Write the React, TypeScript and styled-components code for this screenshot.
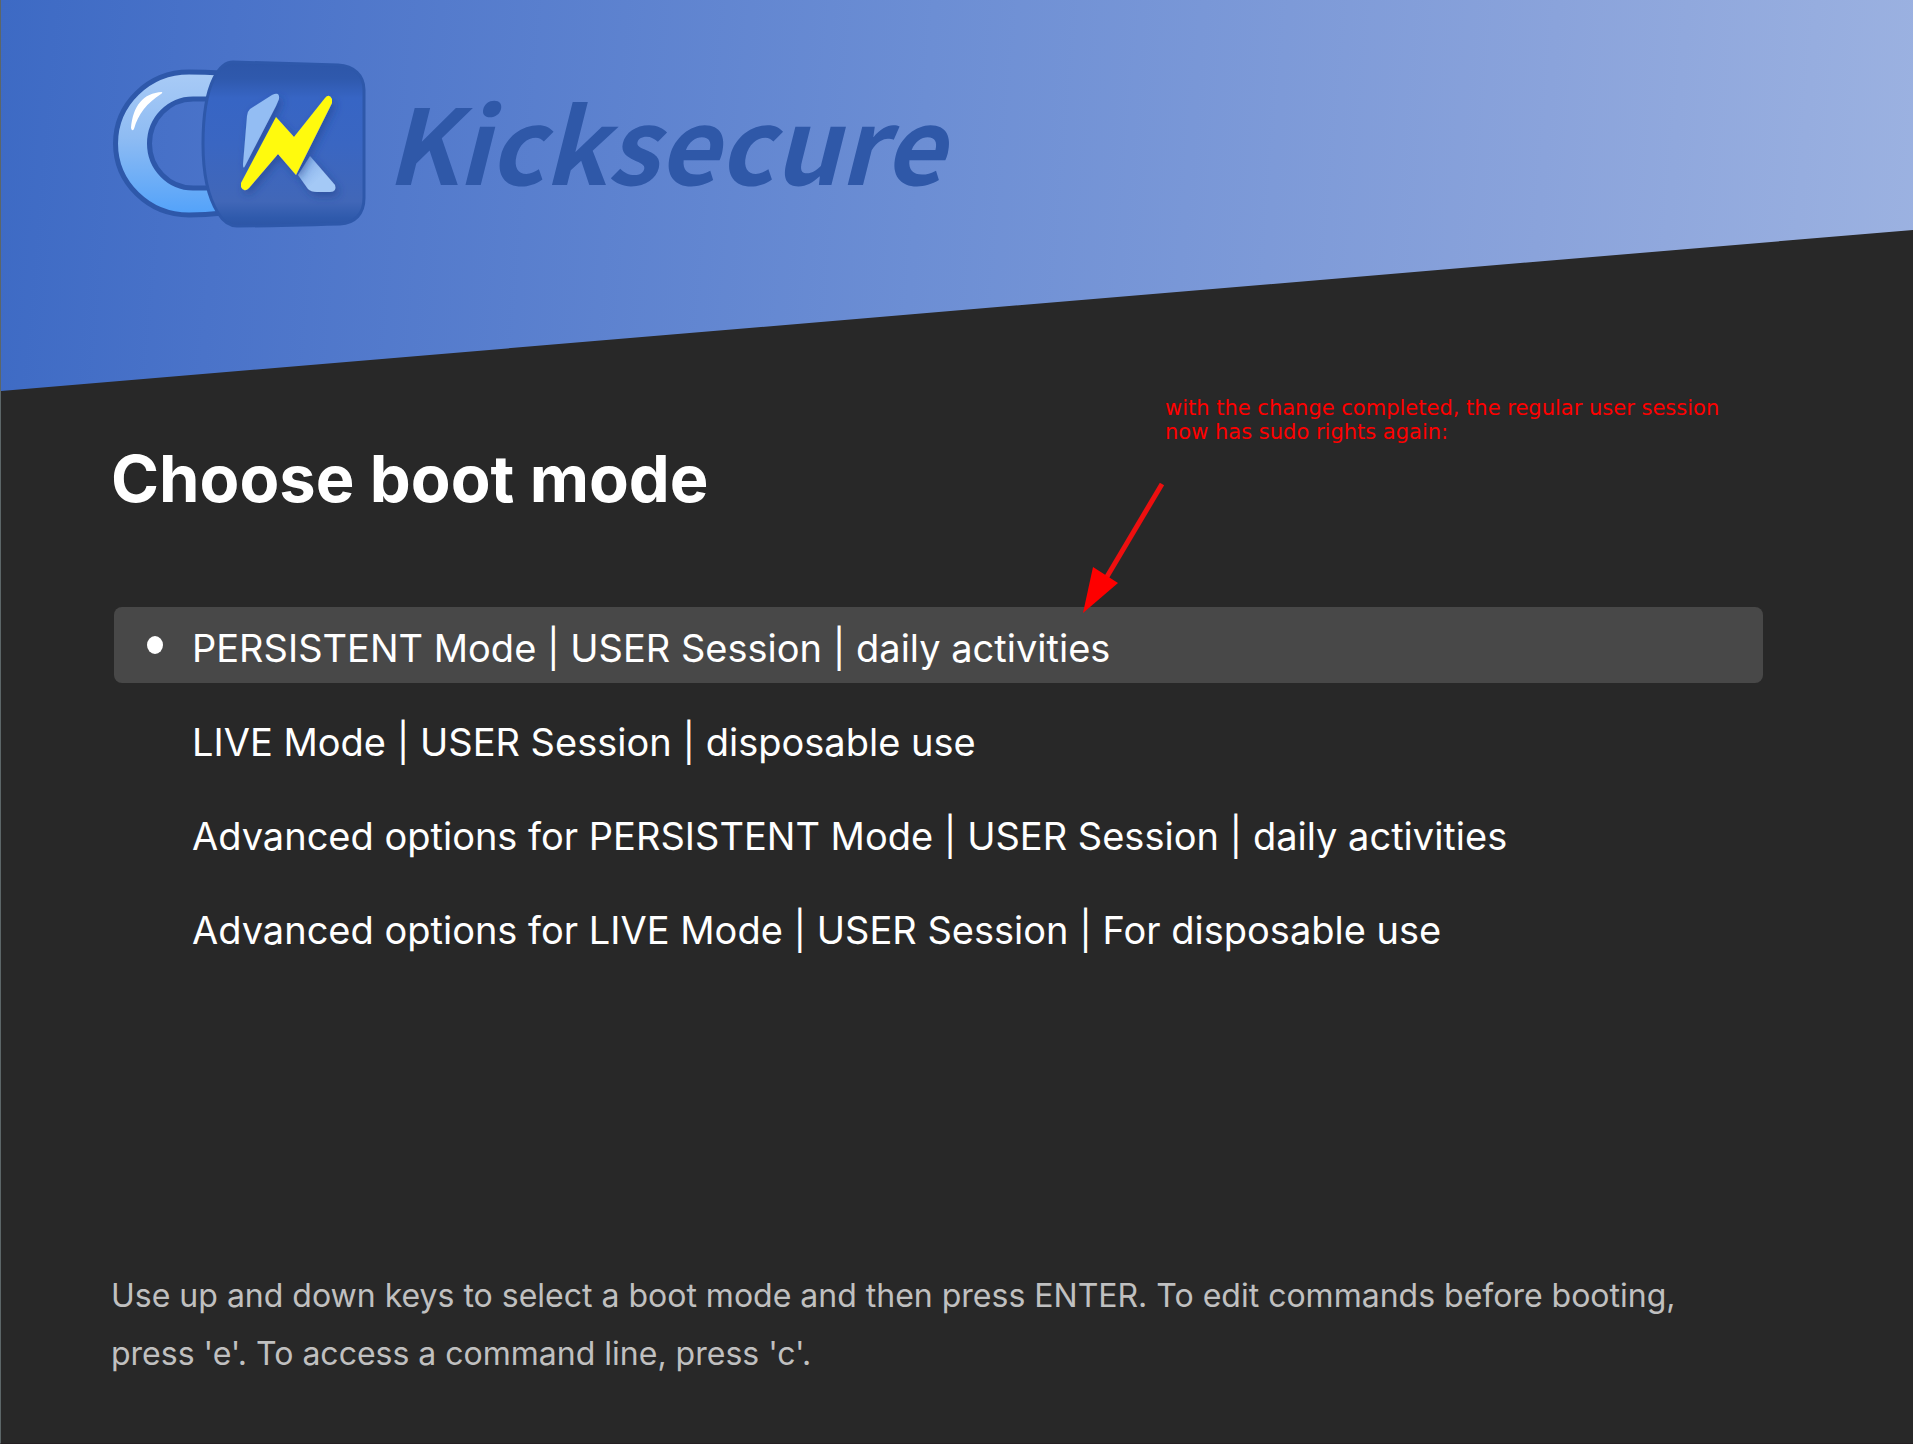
import React, { useState } from "react";
import styled, { createGlobalStyle } from "styled-components";

const Global = createGlobalStyle`
  *, *::before, *::after { box-sizing: border-box; }
  body { margin: 0; background: #282828; }
`;

const Screen = styled.div`
  min-height: 100vh;
  display: flex;
  flex-direction: column;
  background: #282828;
  color: #ffffff;
  border-left: 1px solid #5c6668;
  border-bottom: 1px solid #241f22;
  font-family: Inter, "Liberation Sans", sans-serif;
`;

const Banner = styled.header`
  height: 391px;
  padding: 56px 104px 0;
  background: linear-gradient(95deg, #3d6ac4 0%, #4a73c9 12%, #6c8ed4 48%, #8aa3db 80%, #9cb2e1 100%);
  clip-path: polygon(0 0, 100% 0, 100% 230px, 0 100%);
`;

const Brand = styled.div`
  display: flex;
  align-items: flex-start;
  gap: 17px;
`;

const LogoMark = styled.svg`
  display: block;
  flex: none;
  width: 264px;
  height: 176px;
`;

const BrandName = styled.span`
  font-family: "Noto Sans CJK SC", "Noto Sans", sans-serif;
  font-weight: 700;
  font-style: italic;
  font-size: 104px;
  line-height: 168px;
  color: #2f58a8;
`;

const Main = styled.main`
  flex: 1;
  display: flex;
  flex-direction: column;
  padding: 48px 150px 60px 110px;
`;

const Title = styled.h1`
  margin: 0 0 88px;
  font-size: 65px;
  line-height: 80px;
  font-weight: 700;
`;

const MenuArea = styled.div`
  position: relative;
`;

const Menu = styled.ul`
  list-style: none;
  margin: 0;
  padding: 0 0 0 3px;
  display: flex;
  flex-direction: column;
  gap: 18px;
`;

const Entry = styled.button<{ $selected: boolean }>`
  width: 100%;
  min-height: 76px;
  display: flex;
  align-items: center;
  padding: 0 33px;
  border: 0;
  border-radius: 8px;
  background: ${(p) => (p.$selected ? "#484848" : "transparent")};
  color: inherit;
  font-family: inherit;
  font-size: 38px;
  line-height: 48px;
  text-align: left;
  outline: none;
`;

const Marker = styled.span<{ $visible: boolean }>`
  flex: none;
  width: 16px;
  height: 18px;
  margin-right: 29px;
  border-radius: 50%;
  background: ${(p) => (p.$visible ? "#ffffff" : "transparent")};
`;

const Label = styled.span`
  padding-top: 5px;
`;

const Note = styled.p`
  position: absolute;
  left: 1054px;
  bottom: calc(100% + 163px);
  margin: 0;
  width: 600px;
  font-family: "DejaVu Sans", sans-serif;
  font-size: 21px;
  line-height: 24px;
  color: #fe0000;
`;

const Arrow = styled.svg`
  position: absolute;
  left: 970px;
  top: -126px;
  width: 84px;
  height: 134px;
`;

const Help = styled.p`
  margin: auto 0 0;
  font-size: 32px;
  line-height: 58px;
  color: #c0c0c0;
`;

const entries = [
  "PERSISTENT Mode | USER Session | daily activities",
  "LIVE Mode | USER Session | disposable use",
  "Advanced options for PERSISTENT Mode | USER Session | daily activities",
  "Advanced options for LIVE Mode | USER Session | For disposable use",
];

function PadlockLogo() {
  return (
    <LogoMark viewBox="0 0 264 176" aria-hidden="true">
      <defs>
        <linearGradient id="shackle" x1="0" y1="0" x2="0" y2="1">
          <stop offset="0" stopColor="#a9cbf6" />
          <stop offset="0.45" stopColor="#8fbcf3" />
          <stop offset="1" stopColor="#52a2fa" />
        </linearGradient>
        <linearGradient id="body" x1="0" y1="0" x2="0" y2="1">
          <stop offset="0" stopColor="#2d56a8" />
          <stop offset="0.1" stopColor="#2f59ad" />
          <stop offset="0.22" stopColor="#3765c4" />
          <stop offset="0.5" stopColor="#3a66c2" />
          <stop offset="0.85" stopColor="#4167b8" />
          <stop offset="0.95" stopColor="#2f5aac" />
          <stop offset="1" stopColor="#2d56a6" />
        </linearGradient>
        <linearGradient id="leg" x1="0" y1="0" x2="1" y2="1">
          <stop offset="0" stopColor="#7ea9e6" />
          <stop offset="0.6" stopColor="#a4c9f6" />
        </linearGradient>
        <filter id="soft" x="-30%" y="-30%" width="160%" height="160%">
          <feDropShadow dx="3" dy="4" stdDeviation="4" floodColor="#1f4088" floodOpacity="0.55" />
        </filter>
      </defs>
      <path
        d="M116 17Q100 16 84 16A73.500 71.500 0 0 0 84 159Q100 159 118 157L106 132H88A43.500 44.500 0 0 1 88 43H106z"
        fill="url(#shackle)"
        stroke="#2e58aa"
        strokeWidth="5"
      />
      <path d="M26 72C28 50 38 37 57 36Q58 37 56 38C42 47 33 58 29 73Q27 76 26 72z" fill="#fff" />
      <path
        d="M128 6C160 7 200 8 233 9C249 10 259 19 259 34V142C259 158 250 167 235 168C200 169 160 170 132 170Q121 170 113 157C103 141 98 118 98 88C98 60 101 38 109 22Q117 6 128 6z"
        fill="url(#body)"
        stroke="#2e58aa"
        strokeWidth="3"
      />
      <g filter="url(#soft)">
        <path d="M145 53L167 39Q175 35 174 43L171 50L140 110Q138 114 138 108L142 60Q142 56 145 53z" fill="#93bdf3" />
        <path d="M205 100L230 129Q232 136 225 136H212Q206 136 203 133L193 119z" fill="url(#leg)" />
      </g>
      <path
        d="M171 61L189 81L220 42Q224 37 227 43V47L191 119L173 98L144 132Q139 137 136 131V127z"
        fill="#fffa10"
        filter="url(#soft)"
      />
    </LogoMark>
  );
}

export default function App() {
  const [selected, setSelected] = useState(0);

  const onKeyDown = (e: React.KeyboardEvent) => {
    const step = e.key === "ArrowDown" ? 1 : e.key === "ArrowUp" ? -1 : 0;
    if (!step) return;
    e.preventDefault();
    setSelected((s) => Math.min(entries.length - 1, Math.max(0, s + step)));
  };

  return (
    <>
      <Global />
      <Screen>
        <Banner>
          <Brand>
            <PadlockLogo />
            <BrandName>Kicksecure</BrandName>
          </Brand>
        </Banner>
        <Main>
          <Title>Choose boot mode</Title>
          <MenuArea>
            <Menu onKeyDown={onKeyDown}>
              {entries.map((text, i) => (
                <li key={text}>
                  <Entry
                    type="button"
                    $selected={i === selected}
                    aria-current={i === selected}
                    onClick={() => setSelected(i)}
                  >
                    <Marker $visible={i === selected} />
                    <Label>{text}</Label>
                  </Entry>
                </li>
              ))}
            </Menu>
            <Note>
              with the change completed, the regular user session
              <br />
              now has sudo rights again:
            </Note>
            <Arrow viewBox="0 0 84 134" aria-hidden="true">
              <path d="M81 3L24 99" stroke="#ee0f0f" strokeWidth="5" fill="none" />
              <path d="M2 132L12 86L37 102z" fill="#fe0000" />
            </Arrow>
          </MenuArea>
          <Help>
            Use up and down keys to select a boot mode and then press ENTER. To edit commands before booting, press
            'e'. To access a command line, press 'c'.
          </Help>
        </Main>
      </Screen>
    </>
  );
}
